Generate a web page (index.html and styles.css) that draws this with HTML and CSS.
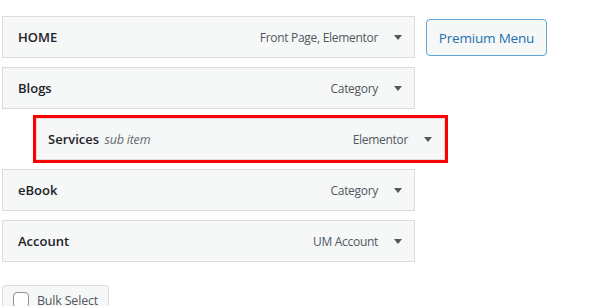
FILE: index.html
```html
<!DOCTYPE html>
<html lang="en">
<head>
  <meta charset="UTF-8" />
  <title>Menu Structure</title>
  <link rel="stylesheet" href="styles.css">
</head>
<body>
  <div class="top-row">
    <ul class="menu-list">
      <li class="menu-item">
        <span class="item-title">HOME</span>
        <span class="item-controls">Front Page, Elementor <span class="arrow"></span></span>
      </li>
      <li class="menu-item">
        <span class="item-title">Blogs</span>
        <span class="item-controls">Category <span class="arrow"></span></span>
      </li>
      <li class="menu-item sub">
        <span class="item-title">Services <em class="sub-label">sub item</em></span>
        <span class="item-controls">Elementor <span class="arrow"></span></span>
      </li>
      <li class="menu-item">
        <span class="item-title">eBook</span>
        <span class="item-controls">Category <span class="arrow"></span></span>
      </li>
      <li class="menu-item">
        <span class="item-title">Account</span>
        <span class="item-controls">UM Account <span class="arrow"></span></span>
      </li>
    </ul>
    <button class="premium-btn">Premium Menu</button>
  </div>

  <label class="bulk-btn">
    <span class="check"></span>
    Bulk Select
  </label>
</body>
</html>
```

FILE: styles.css
```css
body {
  font-family: 'Open Sans', 'Noto Sans', sans-serif;
  font-size: 13px;
  color: #1d2327;
  background: #fff;
  margin: 0;
  padding: 16px 0 0 2px;
}

.top-row {
  display: flex;
  align-items: flex-start;
  gap: 11px;
}

.menu-list {
  list-style: none;
  margin: 0;
  padding: 0;
  width: 413px;
}

.menu-item {
  box-sizing: border-box;
  display: flex;
  align-items: center;
  justify-content: space-between;
  height: 42px;
  padding: 0 12px 0 15px;
  margin-bottom: 9px;
  background: #f6f7f7;
  border: 1px solid #dcdcde;
}

.menu-item.sub {
  margin-left: 34px;
  width: 409px;
  padding-left: 11px;
  outline: 3px solid #ff0000;
}

.item-title {
  font-size: 13px;
  font-weight: 600;
}

.sub-label {
  font-weight: 400;
  font-size: 12.5px;
  color: #646970;
  margin-left: 2px;
  letter-spacing: -0.2px;
}

.item-controls {
  display: flex;
  align-items: center;
  gap: 16px;
  color: #50575e;
  font-size: 12px;
  letter-spacing: -0.3px;
}

.arrow {
  width: 0;
  height: 0;
  border-left: 4px solid transparent;
  border-right: 4px solid transparent;
  border-top: 5px solid #50575e;
}

.premium-btn {
  margin-top: 3px;
  width: 121px;
  height: 37px;
  font-family: inherit;
  font-size: 13.5px;
  letter-spacing: -0.2px;
  color: #2271b1;
  background: #f6f7f7;
  border: 1px solid #5ea6d6;
  border-radius: 4px;
}

.bulk-btn {
  display: inline-flex;
  align-items: center;
  gap: 8px;
  margin-top: 14px;
  height: 30px;
  width: 107px;
  padding: 0 0 0 10px;
  background: #f6f7f7;
  border: 1px solid #dcdcde;
  border-radius: 3px;
  color: #50575e;
  font-size: 12.5px;
  letter-spacing: -0.2px;
  box-sizing: border-box;
}

.check {
  width: 14px;
  height: 14px;
  border: 1px solid #8c8f94;
  border-radius: 4px;
  background: #fff;
}
```
